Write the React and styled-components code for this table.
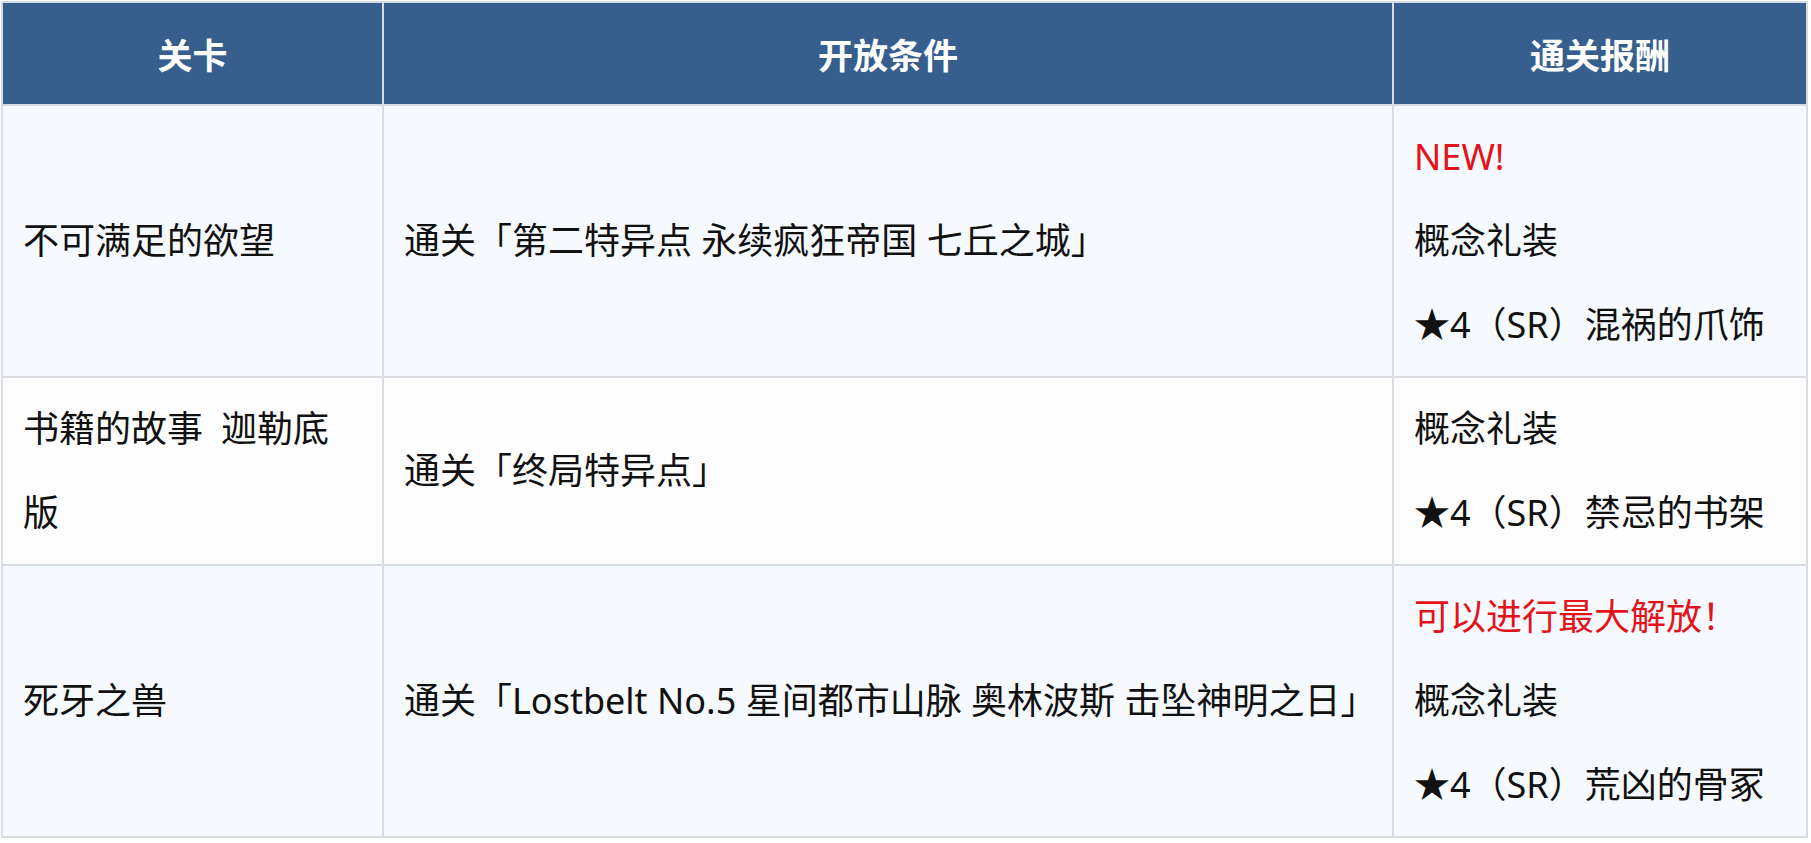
import React from "react";
import styled, { createGlobalStyle } from "styled-components";

const Global = createGlobalStyle`
  html, body { margin: 0; padding: 0; background: #ffffff; }
  body {
    font-family: "Noto Sans", "Noto Sans CJK SC", sans-serif;
    color: #111111;
  }
`;

const Page = styled.div`
  padding: 1px 0 0 1px;
`;

const Table = styled.table`
  width: 1805px;
  border-collapse: collapse;
  table-layout: fixed;
  font-size: 36px;
`;

const Col = styled.col`
  width: ${(p) => p.$w}px;
`;

const HeadCell = styled.th`
  background: #365f8e;
  color: #ffffff;
  font-weight: 700;
  font-size: 35px;
  height: 101px;
  padding: 0 20px;
  text-align: center;
  vertical-align: middle;
  border: 2px solid #d6dbe1;
  font-family: "Noto Sans CJK SC", sans-serif;
`;

const Row = styled.tr`
  background: ${(p) => (p.$tint ? "#f6f9fd" : "#fdfdfe")};
`;

const Cell = styled.td`
  border: 2px solid #d9dde2;
  padding: 9px 24px 9px 20px;
  vertical-align: middle;
  line-height: 84px;
`;

const Line = styled.div`
  color: ${(p) => (p.$accent ? "#e3131b" : "inherit")};
`;

const rows = [
  {
    stage: "不可满足的欲望",
    cond: "通关「第二特异点 永续疯狂帝国 七丘之城」",
    reward: [
      { text: "NEW!", accent: true },
      { text: "概念礼装" },
      { text: "★4（SR）混祸的爪饰" },
    ],
    tint: true,
  },
  {
    stage: "书籍的故事\u2002迦勒底版",
    cond: "通关「终局特异点」",
    reward: [{ text: "概念礼装" }, { text: "★4（SR）禁忌的书架" }],
    tint: false,
  },
  {
    stage: "死牙之兽",
    cond: "通关「Lostbelt No.5 星间都市山脉 奥林波斯 击坠神明之日」",
    reward: [
      { text: "可以进行最大解放！", accent: true },
      { text: "概念礼装" },
      { text: "★4（SR）荒凶的骨冢" },
    ],
    tint: true,
  },
];

export default function App() {
  return (
    <Page>
      <Global />
      <Table>
        <colgroup>
          <Col $w={381} />
          <Col $w={1010} />
          <Col $w={414} />
        </colgroup>
        <thead>
          <tr>
            <HeadCell>关卡</HeadCell>
            <HeadCell>开放条件</HeadCell>
            <HeadCell>通关报酬</HeadCell>
          </tr>
        </thead>
        <tbody>
          {rows.map((r, i) => (
            <Row key={i} $tint={r.tint}>
              <Cell>{r.stage}</Cell>
              <Cell>{r.cond}</Cell>
              <Cell>
                {r.reward.map((l, j) => (
                  <Line key={j} $accent={l.accent}>
                    {l.text}
                  </Line>
                ))}
              </Cell>
            </Row>
          ))}
        </tbody>
      </Table>
    </Page>
  );
}
